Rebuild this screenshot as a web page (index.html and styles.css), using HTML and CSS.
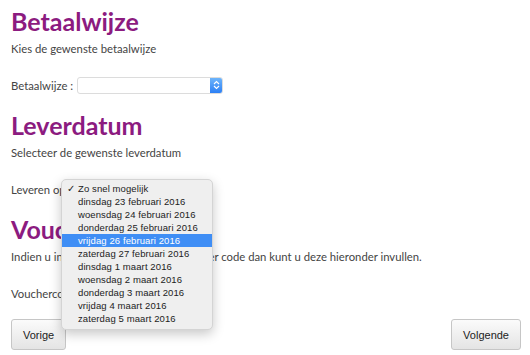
FILE: index.html
```html
<!DOCTYPE html>
<html lang="nl">
<head>
    <meta charset="UTF-8">
    <title>Bestellen</title>
    <link rel="stylesheet" href="styles.css">
</head>
<body>
    <div class="page">
        <div class="section">
            <h1>Betaalwijze</h1>
            <p>Kies de gewenste betaalwijze</p>
            <div class="field">
                <span class="label">Betaalwijze :</span>
                <div class="select">
                    <span class="select-value"></span>
                    <span class="select-arrow">
                        <svg width="7" height="10" viewBox="0 0 7 10"><path d="M1 4 L3.5 1.5 L6 4 M1 6 L3.5 8.5 L6 6" fill="none" stroke="#fff" stroke-width="1.1"/></svg>
                    </span>
                </div>
            </div>
        </div>

        <div class="section section-open">
            <h1>Leverdatum</h1>
            <p>Selecteer de gewenste leverdatum</p>
            <div class="field">
                <span class="label">Leveren op :</span>
                <div class="select select-short">
                    <span class="select-value"></span>
                </div>
                <!-- geopend keuzemenu -->
                <ul class="menu">
                    <li class="checked">Zo snel mogelijk</li>
                    <li>dinsdag 23 februari 2016</li>
                    <li>woensdag 24 februari 2016</li>
                    <li>donderdag 25 februari 2016</li>
                    <li class="hover">vrijdag 26 februari 2016</li>
                    <li>zaterdag 27 februari 2016</li>
                    <li>dinsdag 1 maart 2016</li>
                    <li>woensdag 2 maart 2016</li>
                    <li>donderdag 3 maart 2016</li>
                    <li>vrijdag 4 maart 2016</li>
                    <li>zaterdag 5 maart 2016</li>
                </ul>
            </div>
        </div>

        <div class="section">
            <h1>Voucher</h1>
            <p>Indien u in het bezit bent van een voucher code dan kunt u deze hieronder invullen.</p>
            <div class="field">
                <span class="label">Vouchercode :</span>
                <input class="input" type="text">
            </div>
        </div>

        <div class="buttons">
            <button class="button">Vorige</button>
            <button class="button">Volgende</button>
        </div>
    </div>
</body>
</html>
```

FILE: styles.css
```css
body {
    margin: 0px;
    padding: 0px;
    background: #fff;
    color: #444;
    font-family: 'Lato', 'Open Sans', sans-serif;
}

.page {
    padding: 6px 9px 0px 11px;
}

h1 {
    font-size: 25px;
    line-height: 30px;
    margin: 0px;
    color: #8c1b80;
    font-weight: 700;
}

p {
    font-size: 11.3px;
    line-height: 16px;
    margin: 4.5px 0px 0px 0px;
}

.section {
    padding-bottom: 17px;
}

/* sectie met open menu ligt boven de rest */
.section-open {
    position: relative;
    z-index: 10;
}

/* formulier regels */
.field {
    display: flex;
    align-items: center;
    height: 16px;
    margin-top: 20.5px;
    font-size: 11.3px;
    position: relative;
}

.label {
    margin-right: 4px;
}

.select {
    display: flex;
    width: 144px;
    height: 15px;
    border: 1px solid #dcdcdc;
    border-radius: 3px;
    background: #fff;
    overflow: hidden;
}

.select-short {
    width: 130px;
}

.select-value {
    flex: 1;
}

.select-arrow {
    width: 12px;
    display: flex;
    align-items: center;
    justify-content: center;
    background: linear-gradient(#6db4fb, #2c80f5);
}

.input {
    width: 110px;
    height: 14px;
    border: 1px solid #ccc;
}

/* open keuzemenu */
.menu {
    position: absolute;
    left: 50px;
    top: -2px;
    width: 152px;
    margin: 0px;
    padding: 2px 0px 4px 0px;
    list-style: none;
    background: #efefef;
    border: 1px solid #d4d4d4;
    border-radius: 5px;
    box-shadow: 0px 4px 12px rgba(0, 0, 0, 0.22);
    font-family: 'Liberation Sans', Arial, sans-serif;
    font-size: 9.5px;
    letter-spacing: 0.1px;
    color: #222;
    box-sizing: border-box;
}

.menu li {
    height: 13px;
    line-height: 13px;
    padding-left: 16px;
    position: relative;
}

.menu li.checked::before {
    content: '\2713';
    position: absolute;
    left: 5px;
}

.menu li.hover {
    background: #3f8ef5;
    color: #fff;
}

.buttons {
    display: flex;
    justify-content: space-between;
    margin-top: 1px;
}

.button {
    height: 31px;
    padding: 0px 11px;
    border: 1px solid #c6c6c6;
    border-radius: 3px;
    background: linear-gradient(#fbfbfb, #e4e4e4);
    font-family: 'Liberation Sans', Arial, sans-serif;
    font-size: 11px;
    color: #222;
}
```
